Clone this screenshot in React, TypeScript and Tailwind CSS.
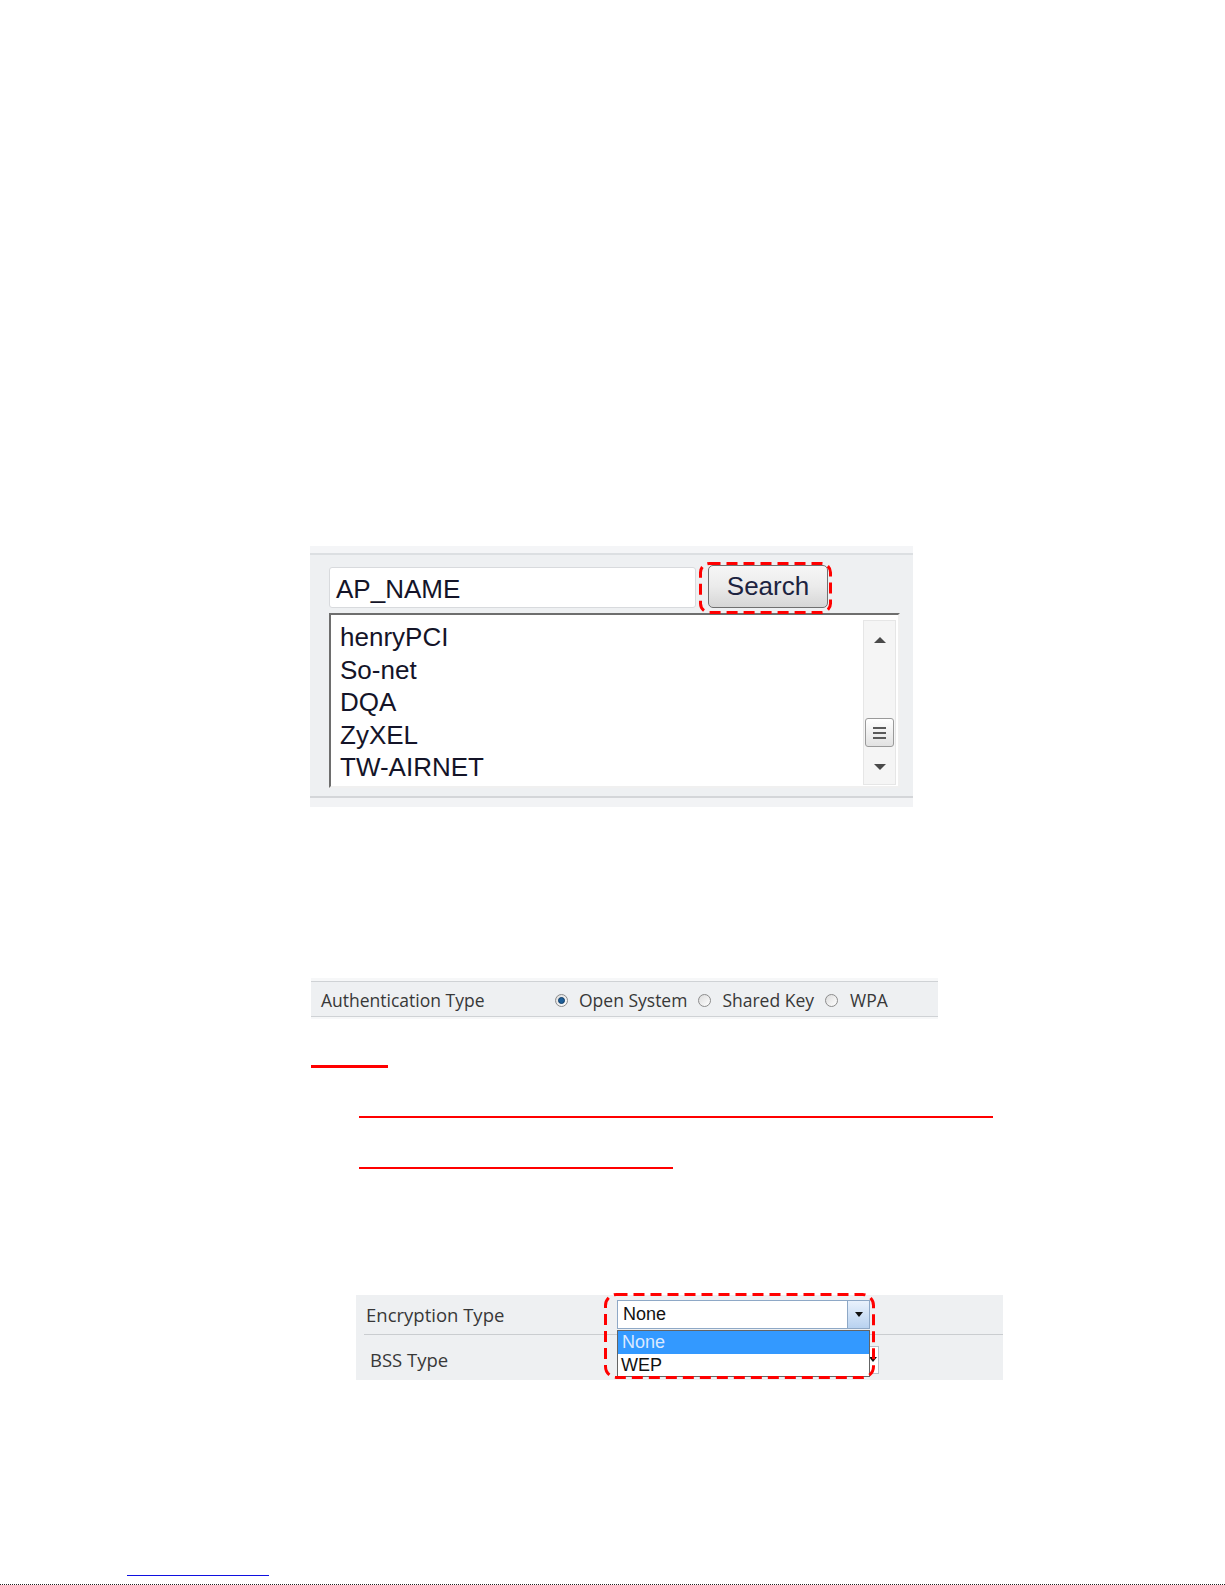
import React from 'react';

const arial = { fontFamily: '"Liberation Sans", Arial, sans-serif' };
const tahoma = { fontFamily: '"Open Sans", "Noto Sans", sans-serif' };

// dashed red annotation frame drawn over a control
const DashFrame: React.FC<{ w: number; h: number; r: number }> = ({ w, h, r }) => (
  <svg width={w} height={h} className="block">
    <rect
      x={1.5}
      y={1.5}
      width={w - 3}
      height={h - 3}
      rx={r}
      fill="none"
      stroke="#ff0000"
      strokeWidth={3}
      strokeDasharray="11 6"
    />
  </svg>
);

const Radio: React.FC<{ checked?: boolean }> = ({ checked }) => (
  <span className="w-[13px] h-[13px] rounded-full border border-[#8c8c8c] bg-gradient-to-br from-[#dcdcdc] to-[#ffffff] flex items-center justify-center shrink-0">
    {checked && <span className="w-[7px] h-[7px] rounded-full bg-[#1e5f99] border border-[#0f3c66]" />}
  </span>
);

const ScrollBar: React.FC = () => (
  <div className="w-[33px] mt-[5px] mb-[1px] mr-[2px] bg-[#f5f5f5] border border-[#e6e6e6] flex flex-col items-center">
    <div className="mt-[16px] w-0 h-0 border-x-[6px] border-x-transparent border-b-[6px] border-b-[#4a4a4a]" />
    <div className="mt-[75px] w-[29px] h-[29px] rounded-[3px] border border-[#9a9a9a] bg-gradient-to-b from-[#ffffff] to-[#e2e2e2] flex flex-col items-center justify-center gap-[3px]">
      <span className="block w-[13px] h-[2px] bg-[#5a5a5a]" />
      <span className="block w-[13px] h-[2px] bg-[#5a5a5a]" />
      <span className="block w-[13px] h-[2px] bg-[#5a5a5a]" />
    </div>
    <div className="mt-[17px] w-0 h-0 border-x-[6px] border-x-transparent border-t-[6px] border-t-[#4a4a4a]" />
  </div>
);

const networks = ['henryPCI', 'So-net', 'DQA', 'ZyXEL', 'TW-AIRNET'];

const App: React.FC = () => {
  return (
    <div className="w-[1225px] h-[1585px] bg-white overflow-hidden flex flex-col">
      {/* AP search screenshot */}
      <div className="ml-[310px] mt-[546px] w-[603px] h-[261px] flex flex-col bg-[#f2f3f5]">
        <div className="h-[7px] bg-[#f4f5f7]" />
        <div className="h-[2px] bg-[#dcdfe2]" />
        <div className="flex-1 bg-[#eef0f2] pl-[19px] pt-[10px]">
          <div className="flex items-start">
            <div
              className="mt-[2px] w-[367px] h-[41px] bg-white border border-[#d8dadd] rounded-[3px] pl-[6px] pt-[3px] flex items-center text-[26px] text-[#141428]"
              style={arial}
            >
              AP_NAME
            </div>
            <div className="relative ml-[12px]">
              <div
                className="w-[120px] h-[43px] rounded-[5px] border border-[#707070] bg-gradient-to-b from-[#f6f6f6] via-[#ebebeb] to-[#d6d6d6] flex items-center justify-center pb-[1px] text-[26px] text-[#1c2340]"
                style={arial}
              >
                Search
              </div>
              <div className="absolute left-[-9px] top-[-3px]">
                <DashFrame w={133} h={52} r={9} />
              </div>
            </div>
          </div>
          <div className="mt-[5px] w-[571px] h-[175px] bg-white border-2 border-t-[#6e6e6e] border-l-[#6e6e6e] border-r-[#f0f0f0] border-b-[#f0f0f0] flex">
            <div className="flex-1 pl-[9px] pt-[6px] text-[26px] leading-[32.5px] text-[#141428]" style={arial}>
              {networks.map((n) => (
                <div key={n}>{n}</div>
              ))}
            </div>
            <ScrollBar />
          </div>
        </div>
        <div className="h-[2px] bg-[#d4d6d9]" />
        <div className="h-[9px] bg-[#f2f3f5]" />
      </div>

      {/* Authentication type screenshot */}
      <div className="ml-[311px] mt-[171px] w-[627px] h-[41px] flex flex-col">
        <div className="h-[3px] bg-[#f6f7f8]" />
        <div className="h-[1px] bg-[#cfd2d5]" />
        <div className="h-[34px] bg-[#eef0f2] flex items-center pl-[10px] pt-[3px] text-[17.5px] text-[#383838]" style={tahoma}>
          <span className="w-[234px] shrink-0">Authentication Type</span>
          <Radio checked />
          <span className="ml-[11px]">Open System</span>
          <span className="ml-[11px]"><Radio /></span>
          <span className="ml-[11px]">Shared Key</span>
          <span className="ml-[11px]"><Radio /></span>
          <span className="ml-[12px]">WPA</span>
        </div>
        <div className="h-[1px] bg-[#cfd2d5]" />
        <div className="h-[2px] bg-[#f6f7f8]" />
      </div>

      {/* red marks */}
      <div className="ml-[311px] mt-[46px] w-[77px] h-[3px] bg-[#ff0000]" />
      <div className="ml-[359px] mt-[48px] w-[634px] h-[2px] bg-[#ff0000]" />
      <div className="ml-[359px] mt-[49px] w-[314px] h-[2px] bg-[#ff0000]" />

      {/* Encryption type screenshot */}
      <div className="relative ml-[356px] mt-[126px] w-[647px] h-[85px] bg-[#eef0f2] text-[18.5px] text-[#383838]" style={tahoma}>
        <div className="h-[39px] flex items-center pl-[10px]">
          <span className="w-[251px] shrink-0">Encryption Type</span>
          <div className="w-[253px] h-[29px] bg-white border border-[#8ea8c6] flex">
            <span className="flex-1 pl-[5px] flex items-center text-[18px] text-[#111]" style={arial}>
              None
            </span>
            <span className="w-[22px] border-l border-[#8ea8c6] bg-gradient-to-b from-[#eaf2fc] to-[#b8d2f0] flex items-center justify-center">
              <span className="w-0 h-0 border-x-[4px] border-x-transparent border-t-[5px] border-t-[#111]" />
            </span>
          </div>
        </div>
        <div className="ml-[8px] h-[1px] bg-[#cacdd0]" />
        <div className="h-[45px] flex items-center pl-[14px] pt-[4px]">
          <span className="w-[247px] shrink-0">BSS Type</span>
          <div className="w-[262px] h-[28px] bg-white border border-[#b9c2cc] flex justify-end items-center pr-[1px]">
            <span className="w-0 h-0 border-x-[4px] border-x-transparent border-t-[5px] border-t-[#111]" />
          </div>
        </div>

        {/* open dropdown list */}
        <div className="absolute left-[261px] top-[35px] w-[253px] h-[47px] bg-white border border-[#646464] text-[18px]" style={arial}>
          <div className="h-[23px] bg-[#3399ff] text-[#dbe9ff] pl-[4px] leading-[23px]">None</div>
          <div className="h-[22px] text-[#111] pl-[3px] leading-[22px]">WEP</div>
        </div>
        <div className="absolute left-[248px] top-[-2px]">
          <DashFrame w={271} h={86} r={11} />
        </div>
      </div>

      {/* footer marks */}
      <div className="ml-[127px] mt-[195px] w-[142px] h-[1px] bg-[#1010e0]" />
      <div className="mt-[8px] w-full h-[1px] border-t border-dotted border-[#222]" />
    </div>
  );
};

export default App;
